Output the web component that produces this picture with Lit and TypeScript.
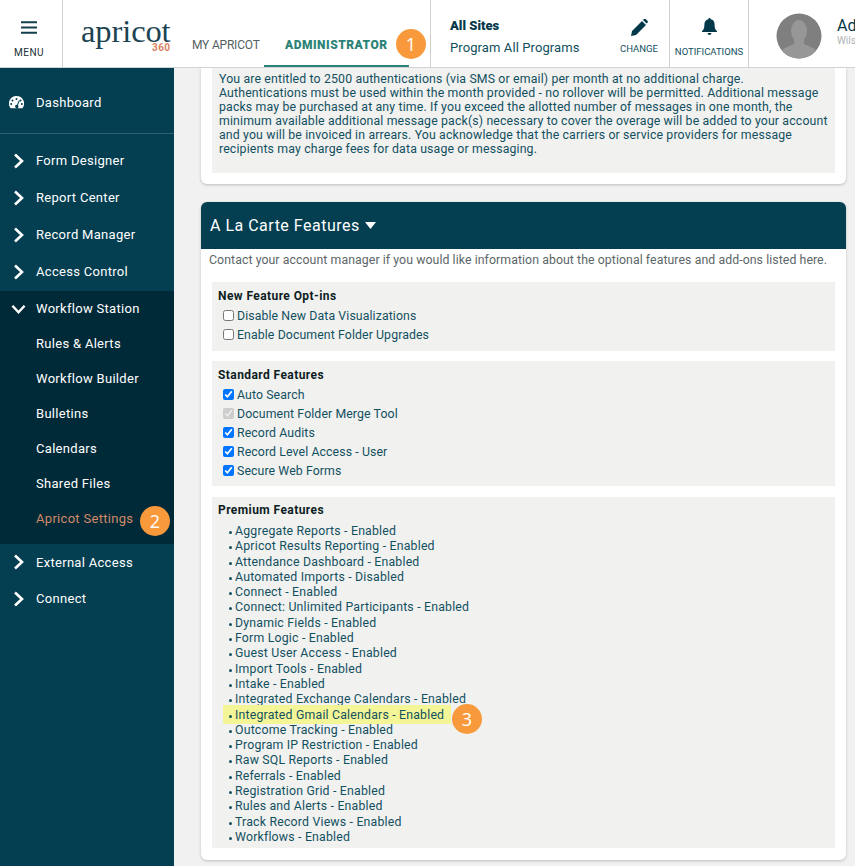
import { LitElement, html, css, svg } from "lit";
import { customElement } from "lit/decorators.js";

const chevR = svg`<svg class="chev" width="14" height="16" viewBox="0 0 14 16"><path d="M3.5 1.5 10.5 8 3.5 14.5" fill="none" stroke="#fff" stroke-width="2.6"/></svg>`;
const chevD = svg`<svg class="chev" width="16" height="14" viewBox="0 0 16 14"><path d="M1.5 3.5 8 10.5 14.5 3.5" fill="none" stroke="#fff" stroke-width="2.6"/></svg>`;

const premium = [
  "Aggregate Reports - Enabled","Apricot Results Reporting - Enabled","Attendance Dashboard - Enabled","Automated Imports - Disabled","Connect - Enabled","Connect: Unlimited Participants - Enabled","Dynamic Fields - Enabled","Form Logic - Enabled","Guest User Access - Enabled","Import Tools - Enabled","Intake - Enabled","Integrated Exchange Calendars - Enabled","Integrated Gmail Calendars - Enabled","Outcome Tracking - Enabled","Program IP Restriction - Enabled","Raw SQL Reports - Enabled","Referrals - Enabled","Registration Grid - Enabled","Rules and Alerts - Enabled","Track Record Views - Enabled","Workflows - Enabled",
];

@customElement("app-root")
export class AppRoot extends LitElement {
  static styles = css`
    :host { display: block; width: 855px; height: 866px; overflow: hidden; position: relative; font-family: Roboto, "Liberation Sans", sans-serif; color: #12505f; background: #f1f1f1; }
    * { box-sizing: border-box; }
    .badge { position: absolute; width: 30px; height: 30px; border-radius: 50%; background: #f89a3c; color: #fff; font-size: 18px; display: flex; align-items: center; justify-content: center; font-family: "Open Sans", sans-serif; }
    header { height: 68px; background: #fff; border-bottom: 1px solid #cfd3d4; display: flex; position: relative; overflow: hidden; }
    header > * { flex: none; }
    .menu { width: 63px; border-right: 1px solid #cfcfcf; display: flex; flex-direction: column; align-items: center; padding-top: 21px; font-size: 10px; letter-spacing: .5px; color: #222f33; }
    .menu svg { margin-bottom: 13px; margin-left: -4px; }
    .menu span { margin-left: -4px; }
    .logo { width: 129px; padding: 19px 0 0 18px; position: relative; }
    .logo .word { display: block; font-family: "Liberation Serif", serif; font-size: 32.5px; line-height: 24px; height: 24px; color: #1d4452; letter-spacing: -.1px; }
    .logo .n360 { position: absolute; left: 89px; top: 43px; font-size: 10px; line-height: 9px; font-weight: 700; color: #d9825f; letter-spacing: .4px; }
    .nav { width: 239px; display: flex; align-items: stretch; border-right: 1px solid #cfcfcf; font-size: 12px; }
    .my { width: 72px; padding-top: 38px; color: #555f62; letter-spacing: -.2px; }
    .adm { width: 145px; padding: 38px 0 0 21px; font-weight: 900; color: #2a8376; border-bottom: 2px solid #2a8376; letter-spacing: .5px; }
    .site { width: 178px; padding: 18px 0 0 19px; font-size: 13px; }
    .site b { display: block; font-weight: 900; color: #03384a; line-height: 16px; margin-bottom: 6px; }
    .site span { letter-spacing: .1px; color: #11505e; }
    .change { width: 61px; border-right: 1px solid #cfcfcf; font-size: 9.5px; display: flex; flex-direction: column; align-items: center; padding-top: 19px; color: #12505f; }
    .change svg { margin-bottom: 7px; }
    .notif { width: 79px; border-right: 1px solid #cfcfcf; font-size: 9.5px; display: flex; flex-direction: column; align-items: center; padding-top: 18px; }
    .notif svg { margin-bottom: 11px; }
    .user { padding: 13px 0 0 27px; display: flex; gap: 15px; white-space: nowrap; }
    .avatar { width: 46px; height: 46px; flex: none; }
    .who { padding-top: 5px; font-size: 16px; line-height: 16px; color: #03384a; font-weight: 400; }
    .who small { display: block; font-size: 10px; line-height: 13px; color: #b0b4b5; font-weight: 400; }

    .body { display: flex; height: 798px; }
    aside { width: 174px; flex: none; background: #033e51; color: #fff; font-size: 13px; font-weight: 400; letter-spacing: .3px; position: relative; }
    .item { display: flex; align-items: center; height: 37px; padding-left: 11px; }
    .item .chev { width: 15px; margin-right: 10px; flex: none; }
    .dash { height: 66px; padding: 4px 0 0 9px; border-bottom: 1px solid #31616f; margin-bottom: 8px; }
    .dash svg { width: 15px; margin-right: 12px; flex: none; }
    .group { background: #012a39; height: 253px; margin-top: 1px; }
    .group .item { height: 35px; }
    .group .sub { padding-left: 36px; }
    .group .sub.active { color: #cf8a68; }
    .ext { height: 36px; }

    main { flex: 1; overflow: hidden; padding: 0 9px 0 27px; }
    .card { background: #fff; border-radius: 6px; box-shadow: 0 1px 3px rgba(0,0,0,.22); }
    .c1 { height: 116px; padding: 0 11px; border-radius: 0 0 6px 6px; margin-bottom: 18px; }
    .intro { background: #f1f1f0; height: 105px; padding: 4px 7px; font-size: 12.3px; line-height: 14px; white-space: nowrap; letter-spacing: .15px; }
    .head { height: 47px; background: #033e51; color: #fff; border-radius: 6px 6px 0 0; font-size: 16px; letter-spacing: .5px; display: flex; align-items: center; padding-left: 9px; gap: 5px; }
    .c2 { height: 658px; }
    .note { font-size: 12.3px; line-height: 22px; padding-left: 8px; color: #5c6668; height: 33px; white-space: nowrap; letter-spacing: .075px; }
    .panel { background: #f1f1f0; margin: 0 11px 10px; padding: 6px 6px 0; }
    .panel h3 { margin: 0; font-size: 12px; line-height: 16px; font-weight: 700; color: #0c1d22; height: 18px; letter-spacing: .42px; }
    .p1 { height: 69px; }
    .p2 { height: 125px; margin-bottom: 11px; }
    .p3 { height: 351px; margin-bottom: 0; padding-top: 5px; }
    .p3 h3 { height: 22px; }
    label { display: flex; align-items: center; height: 19px; font-size: 12.3px; padding-left: 5px; gap: 3px; letter-spacing: .1px; }
    input { margin: 0; width: 11px; height: 11px; flex: none; }
    ul { list-style: none; margin: 0; padding: 0 0 0 5px; }
    li { font-size: 12.3px; line-height: 15.3px; position: relative; padding-left: 12px; white-space: nowrap; letter-spacing: .2px; }
    li::before { content: ""; position: absolute; left: 6px; top: 7px; width: 3px; height: 3px; border-radius: 50%; background: #12505f; }
    li.hl::after { content: ""; position: absolute; z-index: 0; left: 0; top: -3px; width: 228px; height: 19px; background: #f3f596; filter: blur(.6px); }
    li.hl span { position: relative; z-index: 1; }
    li.hl::before { z-index: 1; }
  `;

  render() {
    return html`
      <header>
        <div class="menu">
          <svg width="16" height="13" viewBox="0 0 16 13"><path d="M0 1.2h16M0 6.5h16M0 11.8h16" stroke="#12404f" stroke-width="1.9"/></svg>
          <span>MENU</span>
        </div>
        <div class="logo"><span class="word">apricot</span><span class="n360">360</span></div>
        <div class="nav"><div class="my">MY APRICOT</div><div class="adm">ADMINISTRATOR</div></div>
        <div class="site"><b>All Sites</b><span>Program All Programs</span></div>
        <div class="change">
          <svg width="17" height="17" viewBox="0 0 17 17"><path d="M0 17l1-5L11 2l4 4L5 16zM12 1l1-1q.8-.6 1.6 0l2 2q.7.8 0 1.6l-1 1z" fill="#03384a"/></svg>
          CHANGE
        </div>
        <div class="notif">
          <svg width="15" height="17" viewBox="0 0 15 17"><path d="M7.5 0q1.2 0 1.2 1.3Q12.6 2 12.6 6.5c0 4 .8 5 2.4 6.7v.8H0v-.8C1.600 11.500 2.400 10.500 2.400 6.500 2.400 2 6.300 1.300 6.300 1.300 6.300 0 7.500 0 7.500 0zM5.500 15h4Q9.300 17 7.500 17T5.500 15z" fill="#03384a"/></svg>
          NOTIFICATIONS
        </div>
        <div class="user">
          <svg class="avatar" viewBox="0 0 46 46"><defs><clipPath id="av"><circle cx="23" cy="23" r="22.500"/></clipPath></defs><circle cx="23" cy="23" r="22.500" fill="#7f7f7f"/><g clip-path="url(#av)" fill="#979797"><ellipse cx="23" cy="18" rx="8" ry="11"/><path d="M18 26h10v5l11 5v10H7V36l11-5z"/></g></svg>
          <div class="who">Administrator<small>Wilson Admin</small></div>
        </div>
      </header>
      <div class="body">
        <aside>
          <div class="item dash">
            <svg width="15" height="13" viewBox="0 0 15 13"><path fill-rule="evenodd" fill="#fff" d="M7.500 0A7.500 7.500 0 0 0 1.200 11.700q.3.500.9.500h10.800q.6 0 .9-.5A7.500 7.500 0 0 0 7.500 0zM7.500 2a1 1 0 1 1 0 2 1 1 0 0 1 0-2zM3.500 3.500a1 1 0 1 1 0 2 1 1 0 0 1 0-2zM11.500 3.500a1 1 0 1 1 0 2 1 1 0 0 1 0-2zM2.200 7a1 1 0 1 1 0 2 1 1 0 0 1 0-2zM12.800 7a1 1 0 1 1 0 2 1 1 0 0 1 0-2zM9.800 4.500l.9.400-1.800 4.300a1.700 1.700 0 1 1-.9-.4z"/></svg>
            Dashboard
          </div>
          <div class="item">${chevR}Form Designer</div>
          <div class="item">${chevR}Report Center</div>
          <div class="item">${chevR}Record Manager</div>
          <div class="item">${chevR}Access Control</div>
          <div class="group">
            <div class="item top">${chevD}Workflow Station</div>
            <div class="item sub">Rules &amp; Alerts</div>
            <div class="item sub">Workflow Builder</div>
            <div class="item sub">Bulletins</div>
            <div class="item sub">Calendars</div>
            <div class="item sub">Shared Files</div>
            <div class="item sub active">Apricot Settings</div>
          </div>
          <div class="item ext">${chevR}External Access</div>
          <div class="item">${chevR}Connect</div>
        </aside>
        <main>
          <div class="card c1">
            <div class="intro">You are entitled to 2500 authentications (via SMS or email) per month at no additional charge.<br>Authentications must be used within the month provided - no rollover will be permitted. Additional message<br>packs may be purchased at any time. If you exceed the allotted number of messages in one month, the<br>minimum available additional message pack(s) necessary to cover the overage will be added to your account<br>and you will be invoiced in arrears. You acknowledge that the carriers or service providers for message<br>recipients may charge fees for data usage or messaging.</div>
          </div>
          <div class="card c2">
            <div class="head">A La Carte Features <svg width="11" height="7" viewBox="0 0 11 7"><path d="M0 0h11L5.500 7z" fill="#fff"/></svg></div>
            <div class="note">Contact your account manager if you would like information about the optional features and add-ons listed here.</div>
            <div class="panel p1">
              <h3>New Feature Opt-ins</h3>
              <label><input type="checkbox"> Disable New Data Visualizations</label>
              <label><input type="checkbox"> Enable Document Folder Upgrades</label>
            </div>
            <div class="panel p2">
              <h3>Standard Features</h3>
              <label><input type="checkbox" checked> Auto Search</label>
              <label><input type="checkbox" checked disabled> Document Folder Merge Tool</label>
              <label><input type="checkbox" checked> Record Audits</label>
              <label><input type="checkbox" checked> Record Level Access - User</label>
              <label><input type="checkbox" checked> Secure Web Forms</label>
            </div>
            <div class="panel p3">
              <h3>Premium Features</h3>
              <ul>${premium.map((p) => html`<li class=${p.startsWith("Integrated Gmail") ? "hl" : ""}><span>${p}</span></li>`)}</ul>
            </div>
          </div>
        </main>
      </div>
      <div class="badge" style="left:396px;top:29px">1</div>
      <div class="badge" style="left:140px;top:506px">2</div>
      <div class="badge" style="left:452px;top:704px">3</div>
    `;
  }
}
